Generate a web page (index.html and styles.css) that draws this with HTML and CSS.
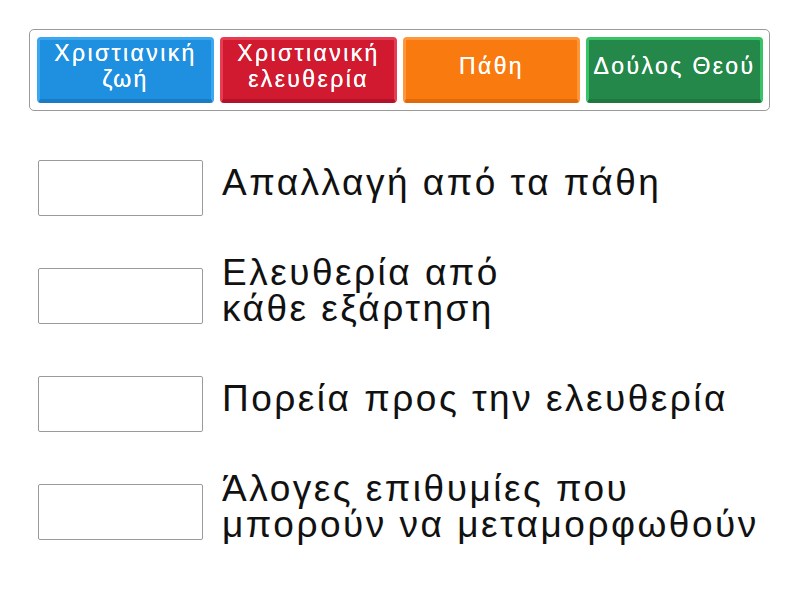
FILE: index.html
```html
<!DOCTYPE html>
<html lang="el">
<head>
<meta charset="utf-8">
<title>Ταίριασμα</title>
<link rel="stylesheet" href="styles.css">
</head>
<body>
<div class="page">
  <div class="tray">
    <div class="tile blue">Χριστιανική ζωή</div>
    <div class="tile red">Χριστιανική ελευθερία</div>
    <div class="tile orange">Πάθη</div>
    <div class="tile green">Δούλος Θεού</div>
  </div>
  <div class="rows">
    <div class="row">
      <div class="slot"></div>
      <div class="label">Απαλλαγή από τα πάθη</div>
    </div>
    <div class="row">
      <div class="slot"></div>
      <div class="label">Ελευθερία από κάθε εξάρτηση</div>
    </div>
    <div class="row">
      <div class="slot"></div>
      <div class="label">Πορεία προς την ελευθερία</div>
    </div>
    <div class="row">
      <div class="slot"></div>
      <div class="label">Άλογες επιθυμίες που μπορούν να μεταμορφωθούν</div>
    </div>
  </div>
</div>
</body>
</html>
```
FILE: styles.css
```css
html, body {
  margin: 0;
  padding: 0;
  background: #ffffff;
}

body {
  font-family: "Liberation Sans", Arial, sans-serif;
  color: #111111;
}

.page {
  box-sizing: border-box;
  min-height: 600px;
  padding: 29px 30px 0 29px;
  width: 800px;
}

.tray {
  display: flex;
  gap: 6px;
  padding: 7px 6px 7px 7px;
  border: 1px solid #9a9a9a;
  border-radius: 5px;
}

.tile {
  flex: 1;
  min-width: 0;
  height: 66px;
  box-sizing: border-box;
  display: flex;
  align-items: center;
  justify-content: center;
  text-align: center;
  color: #ffffff;
  font-size: 23px;
  letter-spacing: 2.4px;
  line-height: 26px;
  border-radius: 4px;
  border-style: solid;
  border-width: 3px 3px 4px 3px;
  padding: 0 0 8px 0;
  text-shadow: 0 0 0.4px #ffffff;
}

.blue {
  background: #1f90e0;
  border-color: #3aa8f0 #3aa8f0 #1a7cc4 #3aa8f0;
}

.red {
  background: #d1192f;
  border-color: #e63c52 #e63c52 #b3132a #e63c52;
}

.orange {
  background: #f97b0f;
  border-color: #ff963a #ff963a #e06a08 #ff963a;
}

.green {
  background: #24884a;
  border-color: #38c466 #38c466 #1e7840 #38c466;
}

.rows {
  display: flex;
  flex-direction: column;
  gap: 52px;
  padding: 49px 0 0 9px;
}

.row {
  display: flex;
  align-items: center;
  height: 56px;
  gap: 19px;
}

.slot {
  flex: none;
  width: 165px;
  height: 56px;
  box-sizing: border-box;
  border: 1px solid #9a9a9a;
  border-radius: 2px;
  background: #ffffff;
}

.label {
  flex: 1;
  min-width: 0;
  font-size: 37px;
  letter-spacing: 2.5px;
  line-height: 36px;
  padding-bottom: 10px;
  text-wrap: balance;
}
```
